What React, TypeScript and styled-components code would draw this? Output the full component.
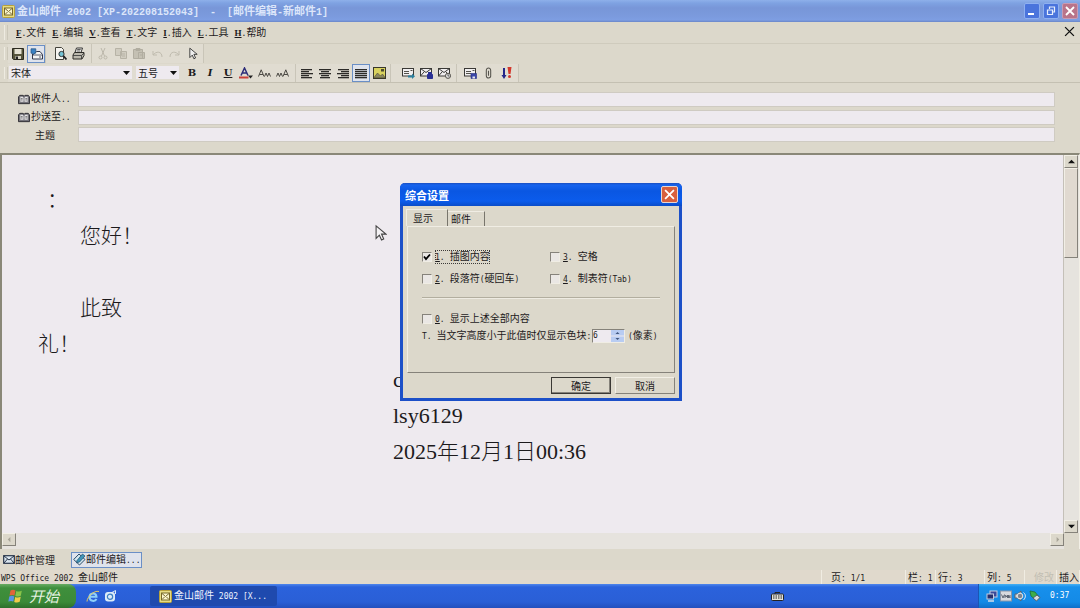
import React from "react";
import styled, { createGlobalStyle, css } from "styled-components";

const face = "#dcd8cb";
const paper = "#eeeaef";
const ink = "#1c1a1c";

const Global = createGlobalStyle`
  * { box-sizing: border-box; }
  body { margin: 0; background: ${face}; }
  button, input, select { font: inherit; color: inherit; margin: 0; padding: 0; border-radius: 0; }
  button { background: none; border: 0; }
`;

const Screen = styled.div`
  position: relative;
  display: flex;
  flex-direction: column;
  min-height: 100vh;
  overflow: hidden;
  background: ${face};
  color: ${ink};
  font: 10px/14px "Noto Sans CJK SC", sans-serif;
  white-space: nowrap;
`;

const Half = styled.span`
  font-family: "DejaVu Sans Mono", monospace;
  font-size: 8px;
  white-space: pre;
`;

/* Latin runs are set half as wide as the ideographs around them. */
function Mixed({ children, as: Run = Half }: { children: string; as?: React.ElementType }) {
  return (
    <span>
      {children.split(/([\x20-\x7e]+)/).map((run, i) =>
        i % 2 ? <Run key={i}>{run}</Run> : run,
      )}
    </span>
  );
}

/* ---------- window frame ---------- */

const TitleBar = styled.header`
  display: flex;
  align-items: center;
  height: 22px;
  padding: 0 2px;
  gap: 2px;
  color: #dce6fa;
  background: linear-gradient(#8eb0ea 0, #7fa2e2 3px, #7896d8 8px, #7b9add 16px, #7e9ee2 20px, #6a86c8 22px);
`;

const TitleText = styled.h1`
  flex: 1;
  display: flex;
  gap: 11px;
  margin: 0;
  font: bold 11px/18px "Noto Sans CJK SC", sans-serif;
`;

const TitleHalf = styled.span`
  font-family: "Liberation Mono", monospace;
  font-size: 10px;
  white-space: pre;
`;

const CaptionButtons = styled.div`
  display: flex;
  gap: 3px;
`;

const CaptionButton = styled.button<{ $close?: boolean }>`
  display: grid;
  place-items: center;
  width: 16px;
  height: 16px;
  border: 1px solid ${(p) => (p.$close ? "#c79bb4" : "#8fb0f0")};
  border-radius: 2px;
  background: ${(p) => (p.$close ? "#b9748a" : "#4a74dc")};
`;

const grip = css`
  &::before {
    content: "";
    align-self: stretch;
    width: 2px;
    margin: 3px 0 3px 4px;
    border-left: 1px solid #eeebe1;
    border-right: 1px solid #cbc7b9;
  }
`;

const MenuBar = styled.nav`
  display: flex;
  align-items: center;
  height: 22px;
  padding-right: 5px;
  gap: 6px;
  border-bottom: 1px solid #cfcbbd;
  ${grip}
  &::before { margin-right: 2px; }
`;

const MenuItem = styled.button`
  u { font-family: "Liberation Serif", serif; font-weight: bold; font-size: 9px; }
`;

const Spacer = styled.div`
  flex: 1;
`;

/* ---------- tool bars ---------- */

const ToolRow = styled.div<{ $last?: boolean }>`
  display: flex;
  height: 20px;
  border-bottom: 1px solid ${(p) => (p.$last ? "#c4c0b2" : face)};
  ${grip}
  ${(p) => p.$last && "height: 19px;"}
`;

const ToolGroup = styled.div<{ $gap?: number; $left?: number; $right?: number }>`
  display: flex;
  align-items: center;
  gap: ${(p) => p.$gap ?? 0}px;
  padding: 0 ${(p) => p.$right ?? 3}px 0 ${(p) => p.$left ?? 3}px;
  border-right: 1px solid #c9c5b8;
  background: #e0dcd1;
`;

const Tools = styled.div`
  display: flex;
`;

const Tool = styled.button<{ $on?: boolean }>`
  display: grid;
  place-items: center;
  width: 18px;
  height: 18px;
  ${(p) =>
    p.$on &&
    css`
      background: #dfe3ec;
      border: 1px solid #6a8fc6;
    `}
`;

const FormatGlyph = styled.span<{ $italic?: boolean; $under?: boolean }>`
  font: bold 10px/12px "DejaVu Serif", serif;
  font-style: ${(p) => (p.$italic ? "italic" : "normal")};
  text-decoration: ${(p) => (p.$under ? "underline" : "none")};
`;

const Combo = styled.span<{ $w: number }>`
  position: relative;
  display: block;
  width: ${(p) => p.$w}px;
  height: 14px;
  select {
    appearance: none;
    width: 100%;
    height: 13px;
    border: 0;
    padding: 0 14px 0 2px;
    background: ${paper};
    line-height: 12px;
    display: block;
  }
  svg { position: absolute; right: 2px; top: 5px; pointer-events: none; }
`;

/* ---------- address fields ---------- */

const Fields = styled.form`
  display: grid;
  gap: 3px;
  height: 70px;
  padding: 8px 25px 0 17px;
  align-content: start;
`;

const Field = styled.div`
  display: grid;
  grid-template-columns: 61px 1fr;
  align-items: center;
  height: 15px;
  input { height: 15px; width: 100%; border: 1px solid #cfcbc2; background: ${paper}; outline: 0; }
`;

const FieldLabel = styled.label<{ $plain?: boolean }>`
  display: flex;
  align-items: center;
  gap: 1px;
  padding-left: ${(p) => (p.$plain ? 18 : 1)}px;
`;

/* ---------- document ---------- */

const Editor = styled.main`
  flex: 1;
  display: grid;
  grid-template-columns: 1fr 15px;
  grid-template-rows: 1fr 16px;
  border-left: 2px solid #8a8878;
  border-top: 2px solid #8a8878;
  border-right: 1px solid #f2efe6;
`;

const Page = styled.article`
  background: ${paper};
  padding: 27px 36px 0;
  border-right: 1px solid #c4c0b8;
  color: #1c1a1c;
  font: 300 21px/36px "Liberation Serif", "Noto Sans CJK SC", serif;
`;

const Line = styled.p<{ $in?: number }>`
  margin: 0;
  height: 36px;
  padding-left: ${(p) => p.$in ?? 0}px;
`;

const Signature = styled(Line)`
  padding-left: 355px;
  font-size: 22px;
`;

const VScroll = styled.div`
  display: flex;
  flex-direction: column;
  background: #e6e3de;
`;

const HScroll = styled.div`
  display: flex;
  justify-content: space-between;
  background: #e6e3de;
`;

const raised = css`
  background: ${face};
  border: 1px solid;
  border-color: #f2efe6 #85827a #85827a #f2efe6;
`;

const ScrollButton = styled.button`
  ${raised}
  display: grid;
  place-items: center;
  width: 14px;
  height: 13px;
`;

const Thumb = styled.div`
  ${raised}
  width: 14px;
  height: 90px;
  background: #e0d9d0;
`;

/* ---------- bottom bars ---------- */

const DocTabs = styled.div`
  display: flex;
  align-items: center;
  height: 21px;
  padding-left: 2px;
  gap: 15px;
`;

const DocTab = styled.button<{ $on?: boolean }>`
  display: flex;
  align-items: center;
  height: 16px;
  padding: 0 1px;
  ${(p) =>
    p.$on &&
    css`
      background: #dfe3ec;
      border: 1px solid #6a8fc6;
    `}
`;

const StatusBar = styled.footer`
  display: flex;
  height: 14px;
  background: #e0d9cc;
`;

const Status = styled.div<{ $w?: number; $pad?: number; $off?: boolean }>`
  ${(p) => (p.$w ? `width: ${p.$w}px;` : "flex: 1;")}
  padding-left: ${(p) => p.$pad ?? 1}px;
  border-right: 1px solid #f0ece2;
  color: ${(p) => (p.$off ? "#c2beb3" : ink)};
`;

const Taskbar = styled.div`
  display: flex;
  align-items: center;
  height: 24px;
  color: #fff;
  background: linear-gradient(#4f86ec 0, #2b62dc 3px, #2a5fd6 18px, #2450bd 24px);
`;

const Start = styled.button`
  display: flex;
  align-items: center;
  gap: 6px;
  width: 76px;
  height: 24px;
  padding-left: 8px;
  border-radius: 0 8px 8px 0;
  background: linear-gradient(#68ab62 0, #3f8f3c 4px, #3b8a38 18px, #2d6f2b 24px);
  color: #e6f2e2;
  font-size: 15px;
  font-style: italic;
`;

const Launch = styled.div`
  display: flex;
  gap: 4px;
  width: 74px;
  padding-left: 10px;
`;

const TaskButton = styled.button`
  display: flex;
  align-items: center;
  gap: 2px;
  width: 127px;
  height: 20px;
  padding-left: 9px;
  border-radius: 2px;
  background: #1f4aae;
  color: #eef3ff;
`;

const ImeSlot = styled.div`
  flex: 1;
  display: flex;
  justify-content: flex-end;
  padding-right: 194px;
`;

const Tray = styled.div`
  display: flex;
  align-items: center;
  gap: 2px;
  width: 102px;
  height: 24px;
  padding-left: 7px;
  border-left: 1px solid #1a56b4;
  background: linear-gradient(#45b0f4 0, #1790ec 3px, #148ae6 18px, #106fc8 24px);
`;

const Clock = styled.time`
  margin-left: 7px;
  font: 8px/12px "DejaVu Sans Mono", monospace;
`;

/* ---------- settings dialog ---------- */

const Dialog = styled.section`
  position: absolute;
  left: 400px;
  top: 183px;
  width: 282px;
  border: 3px solid #1c50c8;
  border-top: 0;
  border-radius: 5px 5px 0 0;
  background: ${face};
`;

const DialogTitle = styled.header`
  display: flex;
  align-items: center;
  justify-content: space-between;
  height: 23px;
  margin: 0 -3px;
  padding: 0 4px 0 5px;
  border-radius: 5px 5px 0 0;
  background: linear-gradient(#1a4fc0 0, #1764ee 2px, #0a57e2 8px, #0b5cec 18px, #0a4cc8 23px);
  color: #fff;
  h2 { margin: 0; font: bold 11px/18px "Noto Sans CJK SC", sans-serif; }
`;

const CloseBox = styled.button`
  display: grid;
  place-items: center;
  width: 17px;
  height: 17px;
  border: 1px solid #e8d6d0;
  border-radius: 2px;
  background: #d8603e;
`;

const TabStrip = styled.div`
  display: flex;
  align-items: flex-end;
  height: 20px;
  padding: 0 3px;
`;

const TabButton = styled.button<{ $on?: boolean }>`
  height: ${(p) => (p.$on ? 17 : 15)}px;
  width: ${(p) => (p.$on ? 42 : 37)}px;
  padding-left: ${(p) => (p.$on ? 6 : 3)}px;
  text-align: left;
  border: solid;
  border-width: 1px 1px 0 ${(p) => (p.$on ? 1 : 0)}px;
  border-color: #f0ede4 #78756c #f0ede4 #f0ede4;
  line-height: 12px;
`;

const TabPanel = styled.div`
  height: 147px;
  margin: 0 4px;
  padding: 23px 14px 0;
  border: 1px solid;
  border-color: #f0ede4 #85827a #85827a #f0ede4;
`;

const Checks = styled.div`
  display: grid;
  grid-template-columns: 128px 1fr;
  row-gap: 8px;
  padding-bottom: 11px;
  border-bottom: 1px solid #b2ae9f;
  box-shadow: 0 1px #eeebe2;
`;

const CheckLabel = styled.label`
  display: flex;
  align-items: center;
  height: 14px;
  gap: 3px;
  input {
    appearance: none;
    flex: none;
    width: 10px;
    height: 10px;
    border: 1px solid;
    border-color: #85827a #f0ede4 #f0ede4 #85827a;
    background: #eae7e4;
  }
  input:checked {
    background: #eae7e4 url("data:image/svg+xml,%3Csvg xmlns='http://www.w3.org/2000/svg' viewBox='0 0 8 8'%3E%3Cpath d='M1 3.5 3 6 7 1.5' fill='none' stroke='black' stroke-width='1.8'/%3E%3C/svg%3E");
  }
`;

const CheckText = styled.span<{ $focus?: boolean }>`
  display: flex;
  gap: 5px;
  line-height: 12px;
  outline: ${(p) => (p.$focus ? "1px dotted #3c3a38" : "none")};
  outline-offset: -1px;
  u { font: 8px/12px "DejaVu Sans Mono", monospace; }
`;

const Extra = styled.div`
  display: grid;
  gap: 3px;
  padding-top: 14px;
`;

const SizeRow = styled.div`
  display: flex;
  align-items: center;
  height: 14px;
  label { width: 170px; }
`;

const Spinner = styled.span`
  display: flex;
  align-items: center;
  width: 33px;
  height: 14px;
  margin-right: 3px;
  border: 1px solid;
  border-color: #85827a #f0ede4 #f0ede4 #85827a;
  background: ${paper};
  input {
    width: 18px;
    height: 12px;
    border: 0;
    background: transparent;
    font: 8px/12px "DejaVu Sans Mono", monospace;
    outline: 0;
  }
`;

const Actions = styled.div`
  display: flex;
  justify-content: flex-end;
  gap: 4px;
  padding: 4px;
`;

const PushButton = styled.button<{ $default?: boolean }>`
  ${raised}
  width: 60px;
  height: 17px;
  line-height: 13px;
  ${(p) => p.$default && "border: 1px solid #3a3834; box-shadow: inset -1px -1px #85827a;"}
`;

const Pointer = styled.svg`
  position: absolute;
  left: 375px;
  top: 224px;
`;

/* ---------- icons ---------- */

const Down = ({ w = 7, c = "#111" }) => (
  <svg width={w} height="4" viewBox="0 0 7 4"><path d="M0 0h7L3.5 4z" fill={c} /></svg>
);
const Arrow = ({ d, c = "#111" }: { d: string; c?: string }) => (
  <svg width="7" height="7" viewBox="0 0 8 8"><path d={d} fill={c} /></svg>
);
const Cross = ({ s = 11, c = "#fff", w = 1.8 }) => (
  <svg width={s} height={s} viewBox="0 0 10 10"><path d="M1 1l8 8M9 1L1 9" stroke={c} strokeWidth={w} /></svg>
);
const AppIcon = () => (
  <svg width="13" height="13" viewBox="0 0 13 13">
    <rect x=".5" y=".5" width="12" height="12" rx="1" fill="#e7dc83" stroke="#b8a23c" />
    <rect x="2.5" y="3" width="8" height="7" fill="#fbf6cf" stroke="#77682a" />
    <path d="M3 3.5l3.5 3L10 3.500M3 9.500l2.500-2.500M10 9.500L7.500 7" stroke="#77682a" fill="none" />
  </svg>
);
const Save = () => (
  <svg width="12" height="12" viewBox="0 0 12 12">
    <path d="M.5.5h11v11h-10l-1-1z" fill="#55543a" stroke="#2b2a20" />
    <path d="M2.500 1h7v5h-7z" fill="#e4e1d2" /><path d="M3.500 8h5.500v3H3.500z" fill="#d6d3c4" /><path d="M4 8.500h2V11H4z" fill="#222" />
  </svg>
);
const MailOut = () => (
  <svg width="13" height="12" viewBox="0 0 13 12">
    <path d="M3.500 6l3-2.500h3.500l2.500 3v4.500H2.500V6z" fill="#f4f4f4" stroke="#33384c" />
    <path d="M3 7h9M9 9h2" fill="none" stroke="#33384c" strokeWidth=".8" />
    <path d="M1 .8h4.800v4.400H4.500L3.500 6.500 2.500 5.200H1z" fill="#3a82c4" stroke="#28507e" strokeWidth=".7" />
  </svg>
);
const Preview = () => (
  <svg width="13" height="13" viewBox="0 0 13 13">
    <path d="M1.500.5h6l2 2v10h-8z" fill="#f5f4f0" stroke="#44433c" /><circle cx="7.500" cy="7" r="2.600" fill="#74c3d4" stroke="#333" /><path d="M9.500 9l3 3.500" stroke="#222" strokeWidth="1.800" />
  </svg>
);
const Print = () => (
  <svg width="13" height="13" viewBox="0 0 13 13">
    <path d="M4.500 1h6L9 5.500H3z" fill="#f5f4f0" stroke="#333" /><path d="M2.500 5.500h9.500v3L10 12H1V8z" fill="#bcb9ae" stroke="#2e2d28" /><path d="M1 8.500h8.500L12 6M9.500 8.500V12M5.200 2.500h3.500M4.700 4h3.500" stroke="#333" strokeWidth=".8" fill="none" />
  </svg>
);
const Cut = () => (
  <svg width="12" height="12" viewBox="0 0 12 12" fill="none" stroke="#bbb7aa">
    <path d="M4 0l3.500 8M8 0L4.500 8" /><circle cx="3.500" cy="9.500" r="1.500" /><circle cx="8.500" cy="9.500" r="1.500" />
  </svg>
);
const Copy = () => (
  <svg width="13" height="12" viewBox="0 0 13 12" fill="#d0ccc0" stroke="#b7b3a6"><path d="M.5.500h6v7h-6zM5.500 3.500h6v7h-6zM7 6h3M7 8h3" /></svg>
);
const Paste = () => (
  <svg width="13" height="12" viewBox="0 0 13 12" fill="#c4c0b3" stroke="#b1ada0"><path d="M.5 1.500h9v9h-9zM3 .500h4v2H3zM5.500 4.500h6v6h-6zM7 7h3" /></svg>
);
const Undo = ({ flip = false }) => (
  <svg width="12" height="8" viewBox="0 0 12 8" fill="none" stroke="#c0bcaf">
    <path d={flip ? "M1 7c0-6 6-6 9-2M10 1v4H6" : "M11 7c0-6-6-6-9-2M2 1v4h4"} />
  </svg>
);
const PointerShape = "M1 1v11.500l3-3 2 4.500 2-1-2-4.500h4z";
const Select = () => (
  <svg width="9" height="13" viewBox="0 0 11 15"><path d={PointerShape} fill="#eee" stroke="#222" /></svg>
);
const FontColor = () => (
  <svg width="14" height="12" viewBox="0 0 14 12">
    <path d="M2 8.500L5.500 1 9 8.500M3.200 6h4.600" fill="none" stroke="#2d2c78" strokeWidth="1.500" /><path d="M0 9.500h9.500v2H0z" fill="#cc4038" /><path d="M9 8.500h5l-2.500 3z" fill="#222" />
  </svg>
);
const Grow = ({ flip = false }) => (
  <svg width="13" height="8" viewBox="0 0 13 8" fill="none" stroke="#4a4842">
    <path d={flip ? "M.5 7.500L2 4l1.500 3.500L5 4l1.500 3.500M7 7.500L9.800.8l2.700 6.700M8 5.500h3.600" : "M.5 7.500L3.200.8 6 7.500M1.500 5.500h3.500M6.500 7.500L8 4l1.500 3.500L11 4l1.500 3.500"} />
  </svg>
);
const Align = ({ rows }: { rows: [number, number][] }) => (
  <svg width="12" height="11" viewBox="0 0 12 11">
    {rows.map(([x, w], i) => <rect key={i} x={x} y={i * 2 + 1} width={w} height="1.300" fill="#2c2b28" />)}
  </svg>
);
const Picture = () => (
  <svg width="13" height="12" viewBox="0 0 13 12">
    <rect x=".5" y=".5" width="12" height="11" fill="#d9d25e" stroke="#3a382a" /><path d="M1 10.500l3.500-4.500 3 3L9.500 7l2.500 3.500z" fill="#8a8660" stroke="#4a4834" strokeWidth=".6" /><path d="M8 2h3v2.500H8z" fill="#4a4830" />
  </svg>
);
const Letter = ({ kind }: { kind: "send" | "lock" | "clock" | "save" }) => {
  const card = kind === "send" || kind === "save";
  return (
    <svg width="13" height="12" viewBox="0 0 13 12">
      <rect x=".5" y="1.500" width="11" height="7.500" fill="#f1eff0" stroke="#3a3936" />
      {card ? <path d="M2 4.500h5M2 6.500h5M8.500 3.500h2" stroke="#55534c" /> : <path d="M.5 1.500l5.500 4 5.500-4M.5 9L4 5M11.500 9L8 5" fill="none" stroke="#3a3936" />}
      {kind === "send" && <path d="M6 8.500h4v-2l3 2.800-3 2.700v-1.500H6z" fill="#2c7f9c" />}
      {kind === "lock" && <path d="M7.500 7.500h5v4h-5zM8.500 7.500v-2h3v2" fill="#2a3094" stroke="#2a3094" />}
      {kind === "clock" && <><circle cx="10" cy="8.800" r="2.600" fill="#ddd" stroke="#55534c" /><path d="M10 7v2h1.500" stroke="#333" fill="none" strokeWidth=".7" /></>}
      {kind === "save" && <><path d="M7 6.500h5.500v5H7z" fill="#3b47a8" stroke="#232c80" strokeWidth=".6" /><path d="M8.500 9.500h2.500v2H8.500z" fill="#e6e6ee" /></>}
    </svg>
  );
};
const Clip = () => (
  <svg width="7" height="12" viewBox="0 0 8 13"><path d="M4 4v5.500M1.500 9V3.500c0-3.500 5-3.500 5 0V10c0 3-5 3-5 0V5" fill="none" stroke="#55534c" strokeWidth="1.200" /></svg>
);
const Priority = () => (
  <svg width="11" height="12" viewBox="0 0 11 12">
    <path d="M2 1h2v7h1.500L3 12 .5 8H2z" fill="#23268a" /><path d="M6.500 0h4l-1 7h-2z" fill="#d2382c" /><circle cx="8.500" cy="9.500" r="1.500" fill="#d2382c" />
  </svg>
);
const Book = () => (
  <svg width="12" height="11" viewBox="0 0 13 11">
    <path d="M.5 2.500L2 1h3.500l1 1 1-1H11l1.500 1.500V10H.5z" fill="#74737a" stroke="#2a2930" />
    <path d="M2.500 2.500H5L6 3.500V8H2.500zM7 3.500l1-1h2.500V8H7z" fill="#e6e4e6" /><path d="M3 4.500h2M3 6h2M8 4.500h2M8 6h2" stroke="#555" strokeWidth=".8" />
  </svg>
);
const TabMail = () => (
  <svg width="12" height="9" viewBox="0 0 12 9"><rect x=".7" y=".7" width="10.600" height="7.600" fill="#d8e4ee" stroke="#26344a" strokeWidth="1.200" /><path d="M1 1l5 4 5-4M1 8l3.500-4M11 8L7.500 4" fill="none" stroke="#26344a" /></svg>
);
const TabEdit = () => (
  <svg width="13" height="13" viewBox="0 0 13 13"><path d="M.7 6.500L6 1l6 5.500L6.500 12z" fill="#d4e8f0" stroke="#2a4a6a" /><path d="M4 7.500L9.500 1l2.500 2-5.500 6-3 .8z" fill="#3f96b8" stroke="#1f4a6a" strokeWidth=".7" /></svg>
);
const Flag = () => (
  <svg width="15" height="14" viewBox="0 0 15 14">
    <path d="M2.500 1.500c2-1 3.500-.8 5 0L6.500 6.500c-1.500-.8-3-.8-5 0z" fill="#e2643a" /><path d="M8.300 2c2 .8 3.500.8 5.500-.2l-1 5c-2 1-3.500.9-5.500.1z" fill="#8ac44a" />
    <path d="M1.300 7.500c2-1 3.500-.8 5 0l-1 5c-1.500-.8-3-.8-5 0z" fill="#5a92e6" /><path d="M7.200 8c2 .8 3.500.8 5.500-.2l-1 5c-2 1-3.500.9-5.500.1z" fill="#f0cc4a" />
  </svg>
);
const Explorer = () => (
  <svg width="14" height="13" viewBox="0 0 14 13"><path d="M10.500 9c-1.500 3-7 2.500-7-2s6.500-5 7-.3H4" fill="none" stroke="#8fd0f8" strokeWidth="2" /><path d="M1 11.500C1 7 8 0 13 1.500" fill="none" stroke="#e6c860" /></svg>
);
const Outlook = () => (
  <svg width="13" height="13" viewBox="0 0 13 13"><rect x="1" y="2" width="10" height="9.500" rx="3" fill="#dcecf8" /><circle cx="6" cy="6.800" r="2.600" fill="none" stroke="#3f82c4" strokeWidth="1.300" /><path d="M4 6.800h4M8 2.500l3.500-2v3.500" stroke="#dcecf8" fill="none" /></svg>
);
const Keyboard = () => (
  <svg width="13" height="9" viewBox="0 0 13 9"><path d="M4 2V.500h5" stroke="#222" fill="none" /><rect x=".5" y="2" width="12" height="6.500" rx="1" fill="#e4e2da" stroke="#222" /><path d="M2 4h9M2 6h9" stroke="#222" strokeDasharray="1.500 1" /></svg>
);
const TrayNet = () => (
  <svg width="12" height="12" viewBox="0 0 12 12"><rect x="4" y="1" width="7" height="6" fill="#3b4a9a" stroke="#c4cce0" /><rect x="1" y="4" width="6.500" height="5" fill="#26306e" stroke="#c4cce0" /><path d="M2 11h6" stroke="#d8dce6" strokeWidth="1.500" /></svg>
);
const TrayVm = () => (
  <svg width="12" height="12" viewBox="0 0 12 12"><rect x=".5" y="1" width="11" height="10" fill="#d8dade" stroke="#8a96a8" /><path d="M1.500 4.500L3 8l1.500-3.500M5 8V5l1.200 2L7.500 5v3M8.500 8V5l1.500 3V5" fill="none" stroke="#5e6674" /></svg>
);
const TrayVolume = () => (
  <svg width="13" height="12" viewBox="0 0 13 12"><path d="M1 4h2.500L7 1v10L3.500 8H1z" fill="#cfd4da" stroke="#5c6470" /><circle cx="6" cy="6" r="2.800" fill="#7d8590" stroke="#e2e6ea" /><path d="M9.500 2.500c2.500 2 2.500 5 0 7.500" fill="none" stroke="#dce6f4" /></svg>
);
const TraySafe = () => (
  <svg width="12" height="12" viewBox="0 0 12 12"><path d="M1 1l5 1 4 5-3 3-5-4z" fill="#3fae4a" stroke="#1d6c2c" strokeWidth=".7" /><path d="M4 8l4-3 3 2.500L7.500 11z" fill="#d8dce0" stroke="#55606c" /></svg>
);

/* ---------- application ---------- */

const menus = [["F", "文件"], ["E", "编辑"], ["V", "查看"], ["T", "文字"], ["I", "插入"], ["L", "工具"], ["H", "帮助"]];

function Check({ n, text, checked }: { n: string; text: string; checked?: boolean }) {
  return (
    <CheckLabel>
      <input type="checkbox" defaultChecked={checked} />
      <CheckText $focus={checked}>
        <span><u>{n}</u><Half>.</Half></span>
        <Mixed>{text}</Mixed>
      </CheckText>
    </CheckLabel>
  );
}

function SettingsDialog() {
  return (
    <Dialog role="dialog" aria-label="综合设置">
      <DialogTitle>
        <h2>综合设置</h2>
        <CloseBox aria-label="关闭"><Cross s={11} w={1.6} /></CloseBox>
      </DialogTitle>
      <TabStrip role="tablist">
        <TabButton $on role="tab" aria-selected>显示</TabButton>
        <TabButton role="tab">邮件</TabButton>
      </TabStrip>
      <TabPanel role="tabpanel">
        <Checks>
          <Check n="1" text="插图内容" checked />
          <Check n="3" text="空格" />
          <Check n="2" text="段落符(硬回车)" />
          <Check n="4" text="制表符(Tab)" />
        </Checks>
        <Extra>
          <Check n="0" text="显示上述全部内容" />
          <SizeRow>
            <label htmlFor="px"><Mixed>T. 当文字高度小于此值时仅显示色块:</Mixed></label>
            <Spinner>
              <input id="px" defaultValue="6" />
              <svg width="13" height="12" viewBox="0 0 13 12">
                <path d="M0 0h13v5.500H0zM0 6.500h13V12H0z" fill="#b8ccf2" />
                <path d="M4.500 4h4l-2-2zM4.500 8h4l-2 2z" fill="#41567e" />
              </svg>
            </Spinner>
            <Mixed>(像素)</Mixed>
          </SizeRow>
        </Extra>
      </TabPanel>
      <Actions>
        <PushButton $default>确定</PushButton>
        <PushButton>取消</PushButton>
      </Actions>
    </Dialog>
  );
}

export default function App() {
  return (
    <Screen>
      <Global />
      <TitleBar>
        <AppIcon />
        <TitleText>
          <Mixed as={TitleHalf}>金山邮件 2002 [XP-202208152043]</Mixed>
          <Mixed as={TitleHalf}>-</Mixed>
          <Mixed as={TitleHalf}>[邮件编辑-新邮件1]</Mixed>
        </TitleText>
        <CaptionButtons>
          <CaptionButton aria-label="最小化"><svg width="10" height="10"><path d="M1 7h6v2H1z" fill="#fff" /></svg></CaptionButton>
          <CaptionButton aria-label="还原"><svg width="10" height="10" fill="none" stroke="#e8eefc"><path d="M3.500 3V1h5v5H7M1.500 4h5v4.500h-5z" strokeWidth="1.200" /></svg></CaptionButton>
          <CaptionButton $close aria-label="关闭"><Cross s={10} /></CaptionButton>
        </CaptionButtons>
      </TitleBar>

      <MenuBar>
        {menus.map(([key, name]) => (
          <MenuItem key={key}><u>{key}</u><Half>.</Half>{name}</MenuItem>
        ))}
        <Spacer />
        <button aria-label="关闭文档"><Cross s={11} c="#111" w={1.2} /></button>
      </MenuBar>

      <ToolRow>
        <ToolGroup $left={1} $right={0}>
          <Tool aria-label="保存"><Save /></Tool>
          <Tool aria-label="发送" $on><MailOut /></Tool>
        </ToolGroup>
        <ToolGroup $left={5} $right={4}>
          <Tool aria-label="预览"><Preview /></Tool>
          <Tool aria-label="打印"><Print /></Tool>
        </ToolGroup>
        <ToolGroup $left={2} $right={1}>
          <Tool aria-label="剪切"><Cut /></Tool>
          <Tool aria-label="复制"><Copy /></Tool>
          <Tool aria-label="粘贴"><Paste /></Tool>
          <Tool aria-label="撤销"><Undo /></Tool>
          <Tool aria-label="重做"><Undo flip /></Tool>
          <Tool aria-label="选择"><Select /></Tool>
        </ToolGroup>
      </ToolRow>

      <ToolRow $last>
        <ToolGroup $left={1} $right={4} $gap={4}>
          <Combo $w={123}><select aria-label="字体"><option>宋体</option></select><Down /></Combo>
          <Combo $w={43}><select aria-label="字号"><option>五号</option></select><Down /></Combo>
          <Tools>
            <Tool aria-label="加粗"><FormatGlyph>B</FormatGlyph></Tool>
            <Tool aria-label="倾斜"><FormatGlyph $italic>I</FormatGlyph></Tool>
            <Tool aria-label="下划线"><FormatGlyph $under>U</FormatGlyph></Tool>
            <Tool aria-label="文字颜色"><FontColor /></Tool>
            <Tool aria-label="增大字号"><Grow /></Tool>
            <Tool aria-label="减小字号"><Grow flip /></Tool>
          </Tools>
        </ToolGroup>
        <ToolGroup $left={2} $right={2}>
          <Tool aria-label="左对齐"><Align rows={[[0, 11], [0, 8], [0, 12], [0, 8], [0, 11]]} /></Tool>
          <Tool aria-label="居中"><Align rows={[[0, 12], [2, 8], [0, 12], [2, 8], [1, 10]]} /></Tool>
          <Tool aria-label="右对齐"><Align rows={[[1, 11], [4, 8], [0, 12], [4, 8], [1, 11]]} /></Tool>
          <Tool aria-label="两端对齐" $on><Align rows={[[0, 12], [0, 12], [0, 12], [0, 12], [0, 12]]} /></Tool>
          <Tool aria-label="插入图片"><Picture /></Tool>
        </ToolGroup>
        <ToolGroup $left={8} $right={3}>
          <Tool aria-label="发送邮件"><Letter kind="send" /></Tool>
          <Tool aria-label="加密"><Letter kind="lock" /></Tool>
          <Tool aria-label="定时"><Letter kind="clock" /></Tool>
        </ToolGroup>
        <ToolGroup $left={4}>
          <Tool aria-label="存为草稿"><Letter kind="save" /></Tool>
          <Tool aria-label="附件"><Clip /></Tool>
          <Tool aria-label="优先级"><Priority /></Tool>
        </ToolGroup>
      </ToolRow>

      <Fields>
        <Field><FieldLabel htmlFor="to"><Book /><Mixed>收件人..</Mixed></FieldLabel><input id="to" /></Field>
        <Field><FieldLabel htmlFor="cc"><Book /><Mixed>抄送至..</Mixed></FieldLabel><input id="cc" /></Field>
        <Field><FieldLabel $plain htmlFor="subject">主题</FieldLabel><input id="subject" /></Field>
      </Fields>

      <Editor>
        <Page>
          <Line $in={9}>：</Line>
          <Line $in={42}>您好！</Line>
          <Line />
          <Line $in={42}>此致</Line>
          <Line>礼！</Line>
          <Signature>c</Signature>
          <Signature>lsy6129</Signature>
          <Signature>2025年12月1日00:36</Signature>
        </Page>
        <VScroll>
          <ScrollButton aria-label="向上滚动"><Arrow d="M0 6h8L4 2z" /></ScrollButton>
          <Thumb />
          <Spacer />
          <ScrollButton aria-label="向下滚动"><Arrow d="M0 2h8L4 6z" /></ScrollButton>
        </VScroll>
        <HScroll>
          <ScrollButton aria-label="向左滚动"><Arrow c="#a8a498" d="M5 1v6L2 4z" /></ScrollButton>
          <ScrollButton aria-label="向右滚动"><Arrow c="#a8a498" d="M3 1v6l3-3z" /></ScrollButton>
        </HScroll>
      </Editor>

      <DocTabs>
        <DocTab><TabMail />邮件管理</DocTab>
        <DocTab $on><TabEdit /><Mixed>邮件编辑...</Mixed></DocTab>
      </DocTabs>

      <StatusBar>
        <Status><Mixed>WPS Office 2002 金山邮件</Mixed></Status>
        <Status $w={84} $pad={9}><Mixed>页: 1/1</Mixed></Status>
        <Status $w={30} $pad={2}><Mixed>栏: 1</Mixed></Status>
        <Status $w={49} $pad={2}><Mixed>行: 3</Mixed></Status>
        <Status $w={40} $pad={2}><Mixed>列: 5</Mixed></Status>
        <Status $w={32} $pad={9} $off>修改</Status>
        <Status $w={23} $pad={2}>插入</Status>
      </StatusBar>

      <Taskbar>
        <Start><Flag />开始</Start>
        <Launch><Explorer /><Outlook /></Launch>
        <TaskButton><AppIcon /><Mixed>金山邮件 2002 [X...</Mixed></TaskButton>
        <ImeSlot><Keyboard /></ImeSlot>
        <Tray><TrayNet /><TrayVm /><TrayVolume /><TraySafe /><Clock>0:37</Clock></Tray>
      </Taskbar>

      <Pointer width="12" height="18" viewBox="0 0 11 15"><path d={PointerShape} fill="#f4f2f4" stroke="#444" /></Pointer>
      <SettingsDialog />
    </Screen>
  );
}
